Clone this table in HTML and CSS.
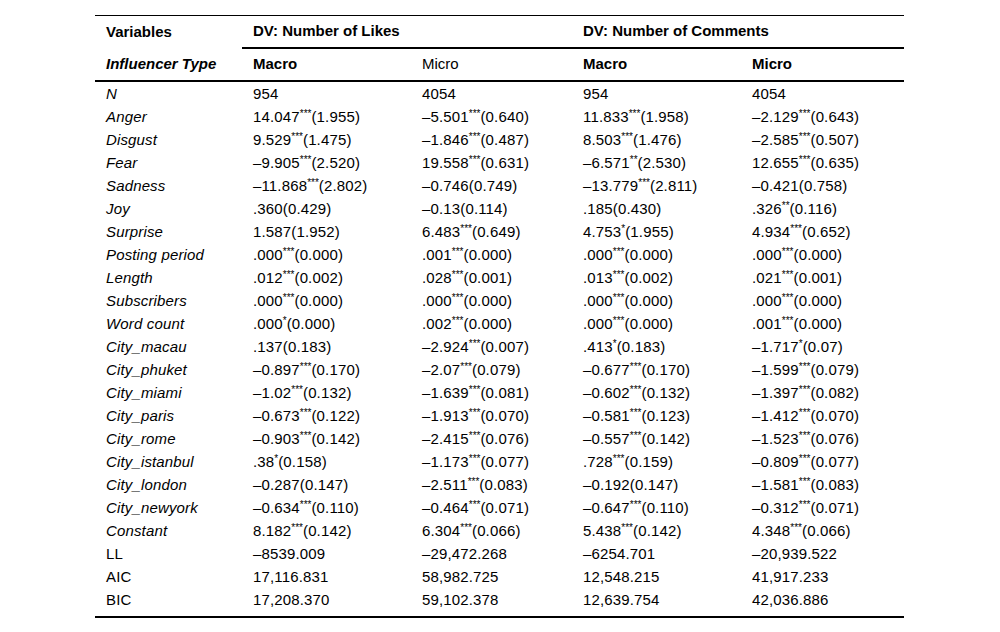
FILE: index.html
```html
<!DOCTYPE html>
<html>
<head>
<meta charset="utf-8">
<link rel="stylesheet" href="styles.css">
</head>
<body>
<table class="reg">
<colgroup>
<col class="c0"><col class="c1"><col class="c2"><col class="c3"><col class="c4">
</colgroup>
<thead>
<tr class="h1">
<th>Variables</th>
<th colspan="2" class="grp">DV: Number of Likes</th>
<th colspan="2" class="grp">DV: Number of Comments</th>
</tr>
<tr class="h2">
<th class="bi">Influencer Type</th>
<th>Macro</th>
<th class="norm">Micro</th>
<th>Macro</th>
<th>Micro</th>
</tr>
</thead>
<tbody>
<tr><td class="v">N</td><td>954</td><td>4054</td><td>954</td><td>4054</td></tr>
<tr><td class="v">Anger</td><td>14.047<sup>***</sup>(1.955)</td><td>–5.501<sup>***</sup>(0.640)</td><td>11.833<sup>***</sup>(1.958)</td><td>–2.129<sup>***</sup>(0.643)</td></tr>
<tr><td class="v">Disgust</td><td>9.529<sup>***</sup>(1.475)</td><td>–1.846<sup>***</sup>(0.487)</td><td>8.503<sup>***</sup>(1.476)</td><td>–2.585<sup>***</sup>(0.507)</td></tr>
<tr><td class="v">Fear</td><td>–9.905<sup>***</sup>(2.520)</td><td>19.558<sup>***</sup>(0.631)</td><td>–6.571<sup>**</sup>(2.530)</td><td>12.655<sup>***</sup>(0.635)</td></tr>
<tr><td class="v">Sadness</td><td>–11.868<sup>***</sup>(2.802)</td><td>–0.746(0.749)</td><td>–13.779<sup>***</sup>(2.811)</td><td>–0.421(0.758)</td></tr>
<tr><td class="v">Joy</td><td>.360(0.429)</td><td>–0.13(0.114)</td><td>.185(0.430)</td><td>.326<sup>**</sup>(0.116)</td></tr>
<tr><td class="v">Surprise</td><td>1.587(1.952)</td><td>6.483<sup>***</sup>(0.649)</td><td>4.753<sup>*</sup>(1.955)</td><td>4.934<sup>***</sup>(0.652)</td></tr>
<tr><td class="v">Posting period</td><td>.000<sup>***</sup>(0.000)</td><td>.001<sup>***</sup>(0.000)</td><td>.000<sup>***</sup>(0.000)</td><td>.000<sup>***</sup>(0.000)</td></tr>
<tr><td class="v">Length</td><td>.012<sup>***</sup>(0.002)</td><td>.028<sup>***</sup>(0.001)</td><td>.013<sup>***</sup>(0.002)</td><td>.021<sup>***</sup>(0.001)</td></tr>
<tr><td class="v">Subscribers</td><td>.000<sup>***</sup>(0.000)</td><td>.000<sup>***</sup>(0.000)</td><td>.000<sup>***</sup>(0.000)</td><td>.000<sup>***</sup>(0.000)</td></tr>
<tr><td class="v">Word count</td><td>.000<sup>*</sup>(0.000)</td><td>.002<sup>***</sup>(0.000)</td><td>.000<sup>***</sup>(0.000)</td><td>.001<sup>***</sup>(0.000)</td></tr>
<tr><td class="v">City_macau</td><td>.137(0.183)</td><td>–2.924<sup>***</sup>(0.007)</td><td>.413<sup>*</sup>(0.183)</td><td>–1.717<sup>*</sup>(0.07)</td></tr>
<tr><td class="v">City_phuket</td><td>–0.897<sup>***</sup>(0.170)</td><td>–2.07<sup>***</sup>(0.079)</td><td>–0.677<sup>***</sup>(0.170)</td><td>–1.599<sup>***</sup>(0.079)</td></tr>
<tr><td class="v">City_miami</td><td>–1.02<sup>***</sup>(0.132)</td><td>–1.639<sup>***</sup>(0.081)</td><td>–0.602<sup>***</sup>(0.132)</td><td>–1.397<sup>***</sup>(0.082)</td></tr>
<tr><td class="v">City_paris</td><td>–0.673<sup>***</sup>(0.122)</td><td>–1.913<sup>***</sup>(0.070)</td><td>–0.581<sup>***</sup>(0.123)</td><td>–1.412<sup>***</sup>(0.070)</td></tr>
<tr><td class="v">City_rome</td><td>–0.903<sup>***</sup>(0.142)</td><td>–2.415<sup>***</sup>(0.076)</td><td>–0.557<sup>***</sup>(0.142)</td><td>–1.523<sup>***</sup>(0.076)</td></tr>
<tr><td class="v">City_istanbul</td><td>.38<sup>*</sup>(0.158)</td><td>–1.173<sup>***</sup>(0.077)</td><td>.728<sup>***</sup>(0.159)</td><td>–0.809<sup>***</sup>(0.077)</td></tr>
<tr><td class="v">City_london</td><td>–0.287(0.147)</td><td>–2.511<sup>***</sup>(0.083)</td><td>–0.192(0.147)</td><td>–1.581<sup>***</sup>(0.083)</td></tr>
<tr><td class="v">City_newyork</td><td>–0.634<sup>***</sup>(0.110)</td><td>–0.464<sup>***</sup>(0.071)</td><td>–0.647<sup>***</sup>(0.110)</td><td>–0.312<sup>***</sup>(0.071)</td></tr>
<tr><td class="v">Constant</td><td>8.182<sup>***</sup>(0.142)</td><td>6.304<sup>***</sup>(0.066)</td><td>5.438<sup>***</sup>(0.142)</td><td>4.348<sup>***</sup>(0.066)</td></tr>
<tr><td>LL</td><td>–8539.009</td><td>–29,472.268</td><td>–6254.701</td><td>–20,939.522</td></tr>
<tr><td>AIC</td><td>17,116.831</td><td>58,982.725</td><td>12,548.215</td><td>41,917.233</td></tr>
<tr class="last"><td>BIC</td><td>17,208.370</td><td>59,102.378</td><td>12,639.754</td><td>42,036.886</td></tr>
</tbody>
</table>
</body>
</html>
```

FILE: styles.css
```css
html, body {
  margin: 0;
  padding: 0;
  background: #ffffff;
}
body {
  padding: 15px 0 0 95px;
  font-family: "Liberation Sans", Arial, sans-serif;
  font-size: 15px;
  color: #000;
}
.reg {
  border-collapse: collapse;
  table-layout: fixed;
  width: 809px;
  border-top: 1px solid #000;
  border-bottom: 2px solid #000;
}
.c0 { width: 147px; }
.c1 { width: 169px; }
.c2 { width: 161px; }
.c3 { width: 169px; }
.c4 { width: 163px; }
.reg th, .reg td {
  text-align: left;
  padding: 0 0 0 11px;
  white-space: nowrap;
  vertical-align: middle;
}
.reg th {
  font-weight: bold;
}
.h1 th {
  height: 29px;
  padding-bottom: 2px;
}
.h1 .grp {
  border-bottom: 2px solid #000;
}
.h2 th {
  height: 29px;
  padding-bottom: 2px;
  border-bottom: 2px solid #000;
}
.h2 .bi {
  font-style: italic;
}
.h2 .norm {
  font-weight: normal;
}
.reg td {
  height: 23px;
  line-height: 17px;
  letter-spacing: 0.15px;
}
.reg td.v {
  font-style: italic;
}
.reg tr.last td {
  height: 25px;
  vertical-align: top;
  padding-top: 3px;
}
.reg sup {
  font-size: 10px;
  line-height: 0;
  vertical-align: 5px;
  letter-spacing: 0;
}
```
